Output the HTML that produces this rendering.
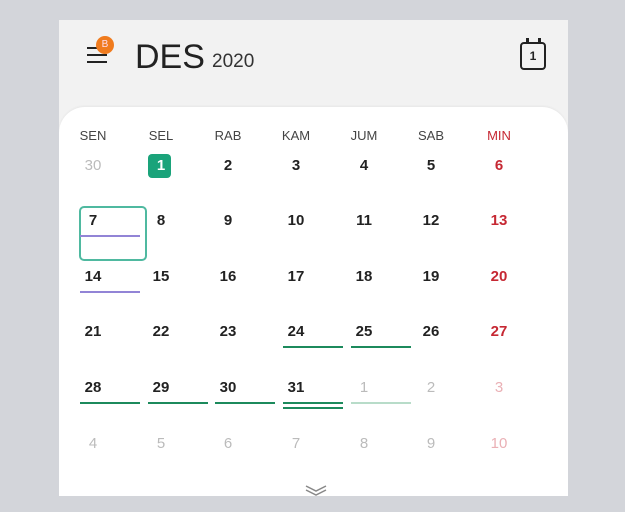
<!DOCTYPE html>
<html><head><meta charset="utf-8"><style>
*{margin:0;padding:0;box-sizing:border-box}
body{width:625px;height:512px;overflow:hidden;background:#d3d5da;font-family:"Liberation Sans",sans-serif;position:relative}
.card{position:absolute;left:59px;top:20px;width:509px;height:476px;background:#f2f2f2;overflow:hidden}
.panel{position:absolute;left:0;top:87px;width:509px;height:400px;background:#fff;border-radius:26px 26px 0 0;box-shadow:0 -1px 2px rgba(0,0,0,0.05)}
.t{position:absolute;transform:translateX(-50%);font-size:15px;color:#222;font-weight:bold;white-space:nowrap}
.dn{position:absolute;transform:translateX(-50%);font-size:13px;color:#444;}
.g{color:#bbb;font-weight:normal}
.r{color:#c62833}
.rl{color:#eab0b5;font-weight:normal}
.ul{position:absolute;height:2px}
</style></head><body>
<div class="card">
 <div style="position:absolute;left:28px;top:27px;width:20px;height:2px;background:#222"></div>
 <div style="position:absolute;left:28px;top:34px;width:20px;height:2px;background:#222"></div>
 <div style="position:absolute;left:28px;top:41px;width:20px;height:2px;background:#222"></div>
 <div style="position:absolute;left:37px;top:16px;width:18px;height:18px;border-radius:50%;background:#f07b1e;color:#fde;font-size:10px;text-align:center;line-height:18px">B</div>
 <div style="position:absolute;left:76px;top:18px;font-size:34px;color:#222;font-weight:300">DES</div>
 <div style="position:absolute;left:153px;top:31px;font-size:19px;color:#333">2020</div>
 <div style="position:absolute;left:461px;top:22px;width:26px;height:28px;border:2.5px solid #222;border-radius:4px;font-size:12px;font-weight:bold;text-align:center;line-height:24px;color:#222">1</div>
 <div style="position:absolute;left:467px;top:18px;width:2.5px;height:6px;background:#222"></div>
 <div style="position:absolute;left:479px;top:18px;width:2.5px;height:6px;background:#222"></div>
 <div class="panel"></div>
</div>
<div id="g"></div>
<script>
var cx=[93,161,228,296,364,431,499];
var h='';
var names=['SEN','SEL','RAB','KAM','JUM','SAB','MIN'];
names.forEach(function(n,i){h+='<div class="dn'+(i==6?' r':'')+'" style="left:'+cx[i]+'px;top:128px">'+n+'</div>'});
var rows=[166,221,277,332,388,444];
var d=[[30,1,2,3,4,5,6],[7,8,9,10,11,12,13],[14,15,16,17,18,19,20],[21,22,23,24,25,26,27],[28,29,30,31,1,2,3],[4,5,6,7,8,9,10]];
h+='<div style="position:absolute;left:148px;top:154px;width:23px;height:24px;border-radius:4px;background:#1aa37a"></div>';
h+='<div style="position:absolute;left:79px;top:206px;width:68px;height:55px;border:2px solid #4fb9a0;border-radius:5px"></div>';
for(var r=0;r<6;r++)for(var c=0;c<7;c++){
 var cls='t';
 if((r==0&&c==0)||(r==4&&c>=4&&c<6)||r==5)cls+=' g';
 if(c==6){cls+=(r<4)?' r':' rl';}
 if(r==4&&c==6)cls='t rl';if(r==5&&c==6)cls='t rl';
 var st='';if(r==0&&c==1)st='color:#fff;';
 h+='<div class="'+cls+'" style="'+st+'left:'+cx[c]+'px;top:'+(rows[r]-9)+'px">'+d[r][c]+'</div>';
}
function ul(c,y,col){h+='<div class="ul" style="left:'+(cx[c]-13)+'px;top:'+y+'px;width:60px;background:'+col+'"></div>'}
ul(0,235,'#9284d6');ul(0,291,'#9284d6');
ul(3,346,'#1c8a5c');ul(4,346,'#1c8a5c');
ul(0,402,'#1c8a5c');ul(1,402,'#1c8a5c');ul(2,402,'#1c8a5c');ul(3,402,'#1c8a5c');ul(3,407,'#1c8a5c');ul(4,402,'#b8dcc9');
h+='<svg style="position:absolute;left:305px;top:485px" width="22" height="12"><path d="M1 1 L11 6 L21 1 M1 5 L11 10 L21 5" stroke="#888" stroke-width="1.5" fill="none"/></svg>';
document.getElementById('g').innerHTML=h;
</script>
</body></html>
